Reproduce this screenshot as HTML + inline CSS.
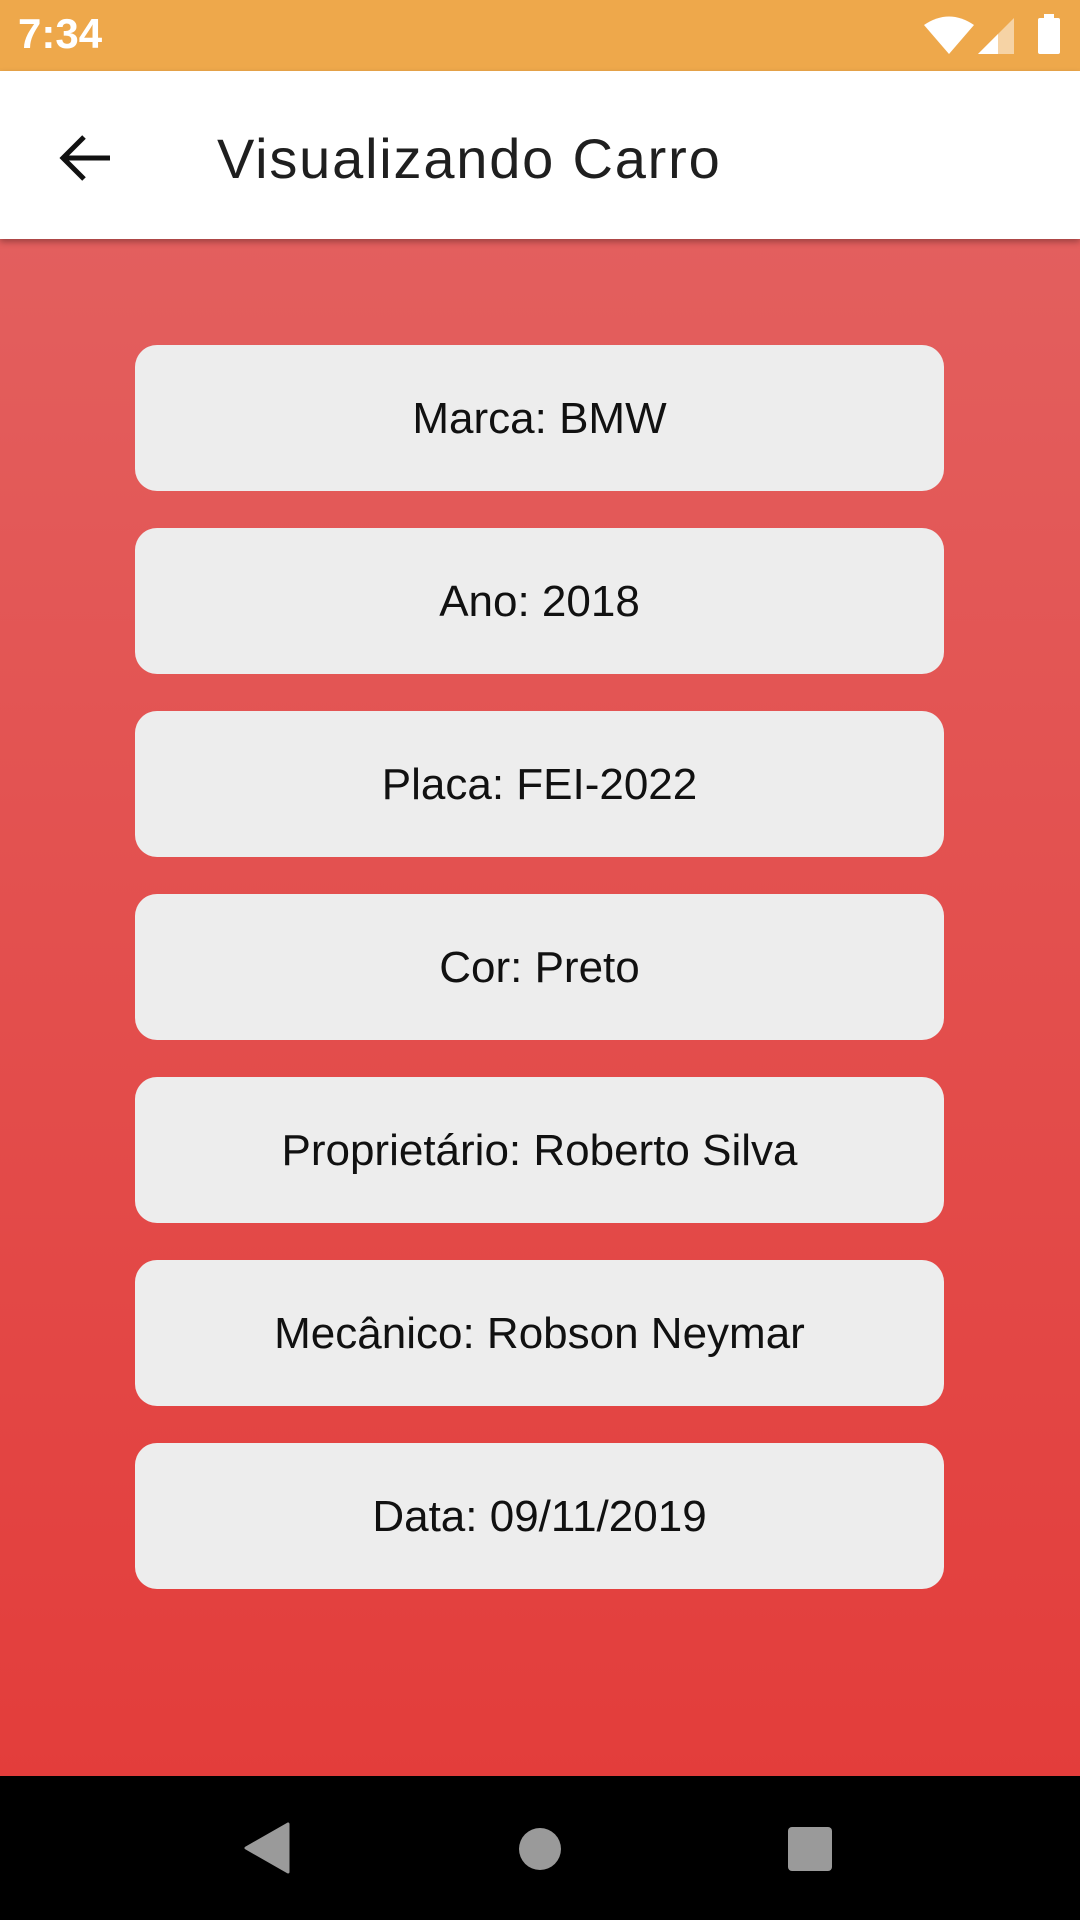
<!DOCTYPE html>
<html><head><style>
body{margin:0;width:1080px;height:1920px;position:relative;overflow:hidden;font-family:"Liberation Sans",sans-serif;background:#e34a48}
.sb{position:absolute;top:0;left:0;width:1080px;height:71px;background:#eea84b;color:#fff}
.sb .t{position:absolute;left:18px;top:10px;font-size:42px;font-weight:bold}
.ab{position:absolute;top:71px;left:0;width:1080px;height:168px;background:#fff;box-shadow:0 3px 6px rgba(0,0,0,.3);z-index:2}
.ab .title{position:absolute;left:217px;top:55px;font-size:56px;letter-spacing:1.8px;color:#1f1f1f}
.main{position:absolute;top:239px;left:0;width:1080px;height:1537px;background:linear-gradient(#e35f5e,#e33d3b)}
.card{position:absolute;left:135px;width:809px;height:146px;background:#ededed;border-radius:22px;display:flex;align-items:center;justify-content:center;font-size:44px;color:#111;padding-top:2px;box-sizing:border-box}
.nav{position:absolute;top:1776px;left:0;width:1080px;height:144px;background:#000}
</style></head><body>
<div class="sb"><span class="t">7:34</span>
<svg style="position:absolute;left:924px;top:16px" width="50" height="38" viewBox="0 0 50 38"><path d="M0 9 Q25 -8 50 9 L25 38Z" fill="#fff"/></svg>
<svg style="position:absolute;left:978px;top:18px" width="36" height="36" viewBox="0 0 36 36"><path d="M36 0 L36 36 L0 36Z" fill="#f6d3a5"/><path d="M20 16 L20 36 L0 36Z" fill="#fff"/></svg>
<div style="position:absolute;left:1038px;top:18px;width:22px;height:36px;background:#fff;border-radius:2px"></div>
<div style="position:absolute;left:1044px;top:14px;width:10px;height:5px;background:#fff"></div>
</div>
<div class="ab">
<svg style="position:absolute;left:58px;top:63px" width="54" height="48" viewBox="0 0 54 48"><path d="M52 24 H6 M26 3 L5 24 L26 45" stroke="#111" stroke-width="5" fill="none"/></svg>
<div class="title">Visualizando Carro</div></div>
<div class="main"></div>
<div class="card" style="top:345px">Marca: BMW</div>
<div class="card" style="top:528px">Ano: 2018</div>
<div class="card" style="top:711px">Placa: FEI-2022</div>
<div class="card" style="top:894px">Cor: Preto</div>
<div class="card" style="top:1077px">Proprietário: Roberto Silva</div>
<div class="card" style="top:1260px">Mecânico: Robson Neymar</div>
<div class="card" style="top:1443px">Data: 09/11/2019</div>
<div class="nav">
<svg style="position:absolute;left:244px;top:46px" width="46" height="52" viewBox="0 0 46 52"><path d="M44 2 L44 50 L2 26Z" fill="#9a9a9a" stroke="#9a9a9a" stroke-width="3" stroke-linejoin="round"/></svg>
<div style="position:absolute;left:519px;top:52px;width:42px;height:42px;border-radius:50%;background:#9a9a9a"></div>
<div style="position:absolute;left:788px;top:51px;width:44px;height:44px;border-radius:4px;background:#9a9a9a"></div>
</div>
</body></html>
